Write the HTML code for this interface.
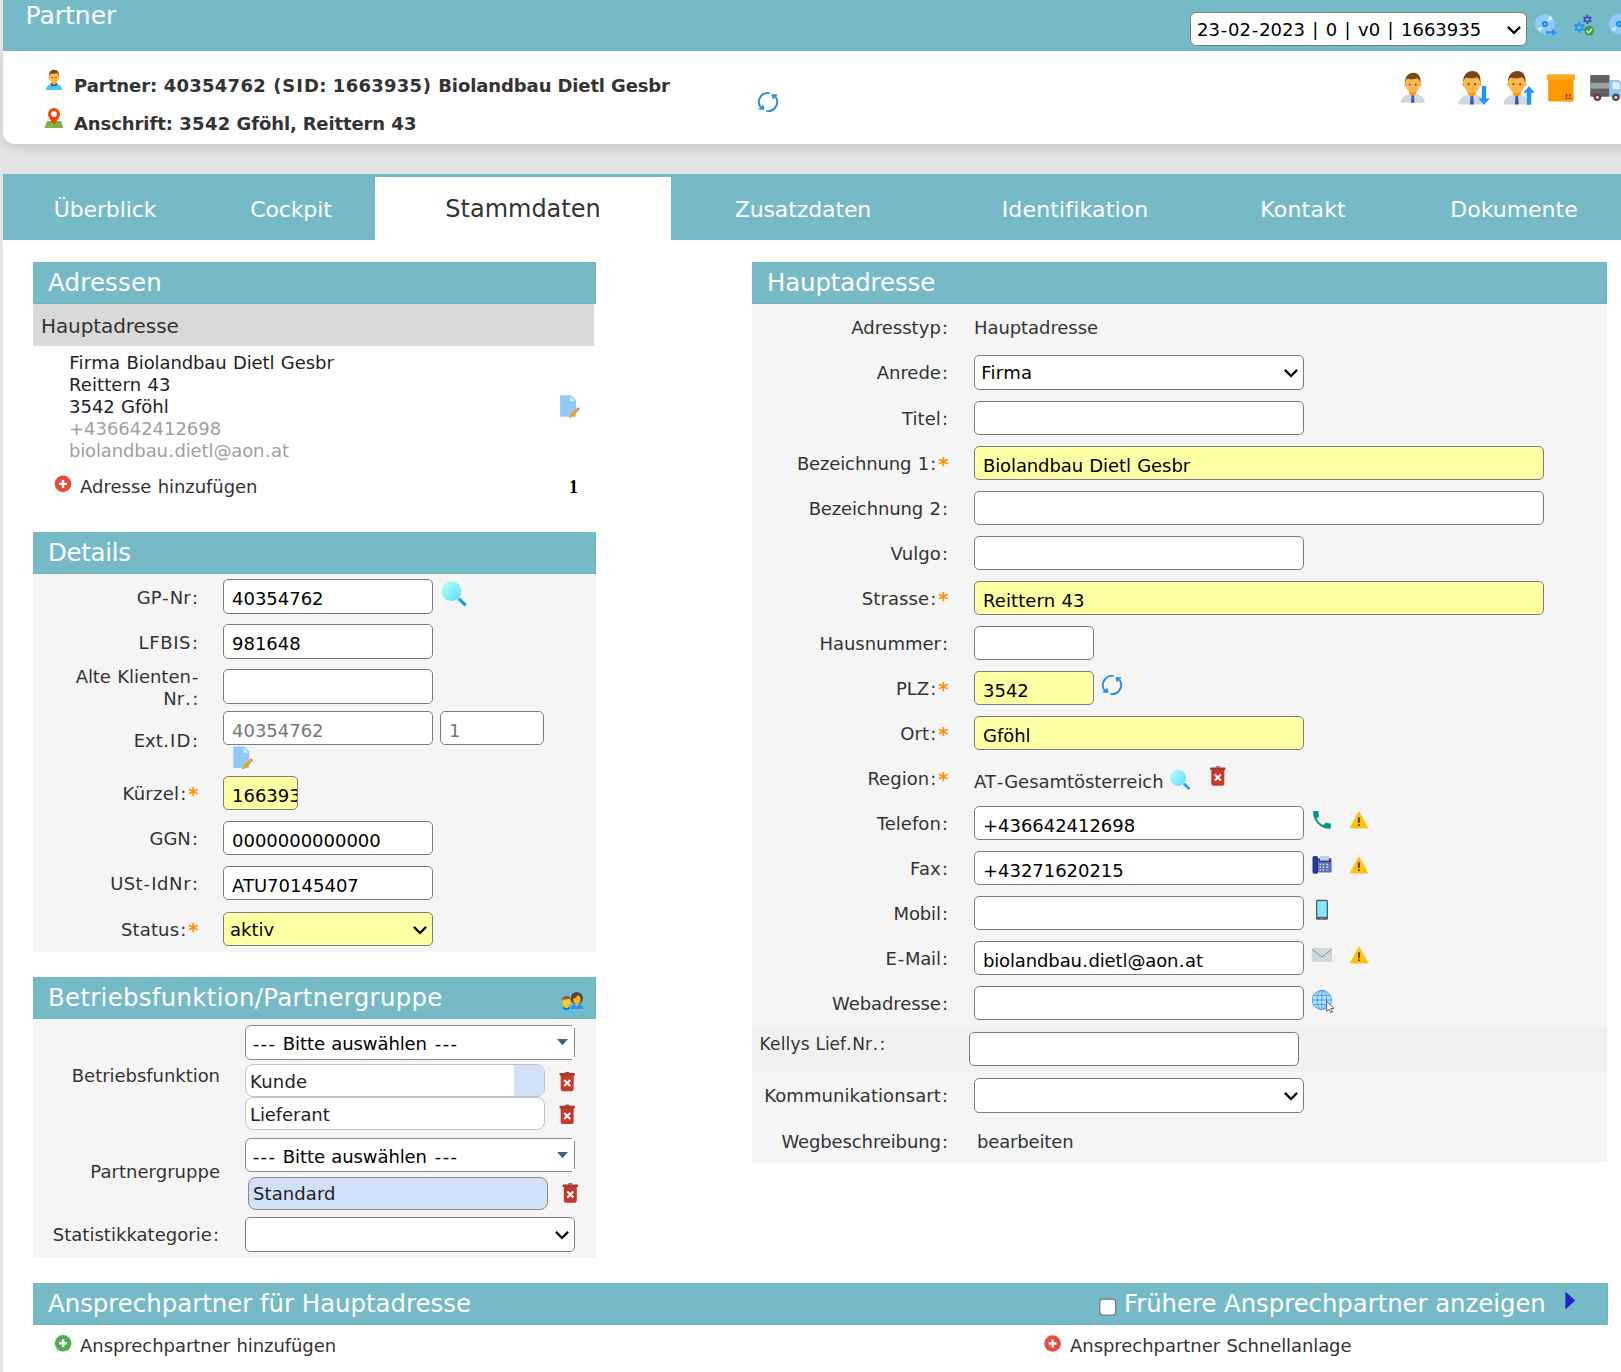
<!DOCTYPE html>
<html lang="de"><head>
<meta charset="utf-8">
<title>Partner</title>
<style>
*{box-sizing:border-box;margin:0;padding:0}
html,body{width:1621px;height:1372px;overflow:hidden;background:#e4e4e4}
body{font-family:"DejaVu Sans","Liberation Sans",sans-serif;font-size:18px;color:#333;position:relative}
.abs{position:absolute}
.teal{background:#76bac7}
.hd{position:absolute;height:42px;background:#76bac7;box-shadow:inset -1px -1px 0 #6cb3c1;color:#fff;font-size:24.4px;line-height:42px;padding-left:15px;white-space:nowrap}
.panel{position:absolute;background:#f5f5f5}
.lbl{position:absolute;text-align:right;white-space:nowrap;line-height:22px;font-size:18px;color:#333}
.req{color:#ff9000;font-weight:bold;font-size:19.5px;line-height:0;letter-spacing:1.25px;margin-left:.9px;margin-right:-.6px;position:relative;top:.6px}
.inp{position:absolute;height:34px;border:1px solid #7d7d7d;border-radius:5px;background:#fff;font-size:18px;line-height:22px;padding:8px 0 0 8px;color:#000;white-space:nowrap;overflow:hidden}
.inp.y{background:#ffffa4}
.inp.h35{height:35px}
.inp.dis{color:#777}
.sel{padding-top:6px;padding-left:6px}
.sel svg{position:absolute;right:4px;top:11.5px}
.txt{position:absolute;white-space:nowrap;line-height:22px}
.tab{position:absolute;top:174px;height:66px;line-height:71px;color:#fff;font-size:22px;text-align:center;white-space:nowrap}

.msel{border-radius:6px 2px 2px 6px;border-color:#8a8a8a;padding:7px 0 0 6px;height:35px;overflow:visible}
.msel::before,.msel::after{content:"";position:absolute;right:-1px;width:3px;height:3px;background:#fff}
.msel::before{top:-1px}
.msel::after{bottom:-1px}
.msel svg{position:absolute;right:6px;top:13.2px}
.ds{white-space:pre}
.chip{height:33px;border-color:#c4c4c4;border-radius:8px;padding:6px 0 0 4px;color:#222}
.chip .hl{position:absolute;right:0;top:0;width:30px;height:100%;background:#d2e1fa}
</style>
</head>
<body>
<!-- top header -->
<div class="abs teal" style="left:3px;top:0;width:1618px;height:51px"></div>
<div class="txt rb" style="left:25.5px;top:1px;color:#fff;font-size:25px;line-height:30px">Partner</div>
<div class="inp sel" style="left:1190px;top:12px;width:337px;height:34px;padding-top:6px;border-radius:6px"><span style="letter-spacing: -0.01px; margin-left: 0px; margin-right: 0px;">23</span><span style="letter-spacing: 1.67px; margin-left: 0.84px; margin-right: -0.84px;">-</span><span style="letter-spacing: -0.01px; margin-left: 0px; margin-right: 0px;">02</span><span style="letter-spacing: 1.67px; margin-left: 0.84px; margin-right: -0.84px;">-</span><span style="letter-spacing: -0.01px; margin-left: 0px; margin-right: 0px;">2023</span><span style="letter-spacing: 1.11px; margin-left: 0.55px; margin-right: -0.55px; white-space: pre;"> | </span><span style="letter-spacing: -0.01px; margin-left: 0px; margin-right: 0px;">0</span><span style="letter-spacing: 1.11px; margin-left: 0.55px; margin-right: -0.55px; white-space: pre;"> | </span><span style="letter-spacing: 0px; margin-left: 0px; margin-right: 0px;">v0</span><span style="letter-spacing: 1.11px; margin-left: 0.55px; margin-right: -0.55px; white-space: pre;"> | </span><span style="letter-spacing: -0.01px; margin-left: 0px; margin-right: 0px;">1663935</span><svg width="16" height="10" viewBox="0 0 16 10"><path d="M1.9 1.9l6.1 6.1 6.1-6.1" fill="none" stroke="#000" stroke-width="2.2"></path></svg></div>

<!-- info card -->
<div class="abs" style="left:3px;top:51px;width:1640px;height:93px;background:#fff;border-radius:0 0 0 12px;box-shadow:0 4px 10px rgba(0,0,0,.12)"></div>
<div class="txt" style="left:74px;top:75px;font-weight:bold;color:#333"><span style="letter-spacing: -0.02px; margin-left: -0.01px; margin-right: 0.01px;">Partner</span><span style="letter-spacing: -0.04px; margin-left: -0.02px; margin-right: 0.02px; white-space: pre;">: </span><span style="letter-spacing: 0.27px; margin-left: 0.14px; margin-right: -0.14px;">40354762</span><span style="letter-spacing: 0.71px; margin-left: 0.36px; margin-right: -0.36px; white-space: pre;"> (</span><span style="letter-spacing: 0.98px; margin-left: 0.49px; margin-right: -0.49px;">SID</span><span style="letter-spacing: -0.04px; margin-left: -0.02px; margin-right: 0.02px; white-space: pre;">: </span><span style="letter-spacing: 0.27px; margin-left: 0.14px; margin-right: -0.14px;">1663935</span><span style="letter-spacing: 0.71px; margin-left: 0.36px; margin-right: -0.36px; white-space: pre;">) </span><span style="letter-spacing: -0.09px; margin-left: -0.04px; margin-right: 0.04px;">Biolandbau</span><span style="letter-spacing: -0.13px; margin-left: -0.06px; margin-right: 0.06px; white-space: pre;"> </span><span style="letter-spacing: -0.14px; margin-left: -0.07px; margin-right: 0.07px;">Dietl</span><span style="letter-spacing: -0.13px; margin-left: -0.06px; margin-right: 0.06px; white-space: pre;"> </span><span style="letter-spacing: -0.14px; margin-left: -0.07px; margin-right: 0.07px;">Gesbr</span></div>
<div class="txt" style="left:74px;top:113px;font-weight:bold;color:#333"><span style="letter-spacing: -0.07px; margin-left: -0.04px; margin-right: 0.04px;">Anschrift</span><span style="letter-spacing: -0.04px; margin-left: -0.02px; margin-right: 0.02px; white-space: pre;">: </span><span style="letter-spacing: 0.27px; margin-left: 0.14px; margin-right: -0.14px;">3542</span><span style="letter-spacing: -0.13px; margin-left: -0.06px; margin-right: 0.06px; white-space: pre;"> </span><span style="letter-spacing: -0.09px; margin-left: -0.04px; margin-right: 0.04px;">Gföhl</span><span style="letter-spacing: -0.23px; margin-left: -0.11px; margin-right: 0.11px; white-space: pre;">, </span><span style="letter-spacing: -0.13px; margin-left: -0.07px; margin-right: 0.07px;">Reittern</span><span style="letter-spacing: -0.13px; margin-left: -0.06px; margin-right: 0.06px; white-space: pre;"> </span><span style="letter-spacing: 0.27px; margin-left: 0.13px; margin-right: -0.13px;">43</span></div>

<!-- tabs -->
<div class="abs teal" style="left:3px;top:174px;width:1618px;height:66px"></div>
<div class="abs" style="left:3px;top:240px;width:1618px;height:1132px;background:#fff"></div>
<div class="abs" style="left:375px;top:177px;width:296px;height:63px;background:#fff"></div>
<div class="tab" style="left:5px;width:200px"><span style="letter-spacing: -0.12px; margin-left: -0.06px; margin-right: 0.06px;">Überblick</span></div>
<div class="tab" style="left:191px;width:200px"><span style="letter-spacing: -0.11px; margin-left: -0.06px; margin-right: 0.06px;">Cockpit</span></div>
<div class="tab" style="left:375px;width:296px;color:#333;font-size:24px;line-height:70px"><span style="letter-spacing: -0.01px; margin-left: -0.01px; margin-right: 0.01px;">Stammdaten</span></div>
<div class="tab" style="left:703px;width:200px"><span style="letter-spacing: -0.11px; margin-left: -0.05px; margin-right: 0.05px;">Zusatzdaten</span></div>
<div class="tab" style="left:975px;width:200px"><span style="letter-spacing: 0.16px; margin-left: 0.08px; margin-right: -0.08px;">Identifikation</span></div>
<div class="tab" style="left:1203px;width:200px"><span style="letter-spacing: 0.21px; margin-left: 0.1px; margin-right: -0.1px;">Kontakt</span></div>
<div class="tab" style="left:1414px;width:200px"><span style="letter-spacing: 0px; margin-left: 0px; margin-right: 0px;">Dokumente</span></div>

<!-- LEFT: Adressen -->
<div class="hd rb" style="left:33px;top:262px;width:563px;letter-spacing:.22px">Adressen</div>
<div class="abs" style="left:33px;top:304px;width:561px;height:42px;background:#d9d9d9;border-top:1px solid #e0dddd"></div>
<div class="txt" style="left:41px;top:314px;font-size:20px;line-height:24px"><span style="letter-spacing: -0.08px; margin-left: -0.04px; margin-right: 0.04px;">Hauptadresse</span></div>
<div class="txt" style="left:69px;top:352px;color:#222"><span style="letter-spacing: 0.32px; margin-left: 0.16px; margin-right: -0.16px;">Firma</span><span style="letter-spacing: 0.6px; margin-left: 0.3px; margin-right: -0.3px; white-space: pre;"> </span><span style="letter-spacing: -0.11px; margin-left: -0.06px; margin-right: 0.06px;">Biolandbau</span><span style="letter-spacing: 0.6px; margin-left: 0.3px; margin-right: -0.3px; white-space: pre;"> </span><span style="letter-spacing: -0.09px; margin-left: -0.04px; margin-right: 0.04px;">Dietl</span><span style="letter-spacing: 0.6px; margin-left: 0.3px; margin-right: -0.3px; white-space: pre;"> </span><span style="letter-spacing: -0.06px; margin-left: -0.03px; margin-right: 0.03px;">Gesbr</span></div>
<div class="txt" style="left:69px;top:374px;color:#222"><span style="letter-spacing: 0.09px; margin-left: 0.04px; margin-right: -0.04px;">Reittern</span><span style="letter-spacing: 0.6px; margin-left: 0.3px; margin-right: -0.3px; white-space: pre;"> </span><span style="letter-spacing: -0.01px; margin-left: 0px; margin-right: 0px;">43</span></div>
<div class="txt" style="left:69px;top:396px;color:#222"><span style="letter-spacing: -0.01px; margin-left: 0px; margin-right: 0px;">3542</span><span style="letter-spacing: 0.6px; margin-left: 0.3px; margin-right: -0.3px; white-space: pre;"> </span><span style="letter-spacing: -0.04px; margin-left: -0.02px; margin-right: 0.02px;">Gföhl</span></div>
<div class="txt" style="left:69px;top:418px;color:#a0a0a0"><span style="letter-spacing: -0.03px; margin-left: -0.02px; margin-right: 0.02px;">+436642412698</span></div>
<div class="txt" style="left:69px;top:440px;color:#a0a0a0"><span style="letter-spacing: -0.13px; margin-left: -0.07px; margin-right: 0.07px;">biolandbau</span><span style="letter-spacing: 0.82px; margin-left: 0.41px; margin-right: -0.41px;">.</span><span style="letter-spacing: -0.11px; margin-left: -0.05px; margin-right: 0.05px;">dietl@aon</span><span style="letter-spacing: 0.82px; margin-left: 0.41px; margin-right: -0.41px;">.</span><span style="letter-spacing: -0.09px; margin-left: -0.05px; margin-right: 0.05px;">at</span></div>
<div class="txt" style="left:80px;top:476px"><span style="letter-spacing: 0.01px; margin-left: 0.01px; margin-right: -0.01px;">Adresse</span><span style="letter-spacing: 0.6px; margin-left: 0.3px; margin-right: -0.3px; white-space: pre;"> </span><span style="letter-spacing: -0.07px; margin-left: -0.03px; margin-right: 0.03px;">hinzufügen</span></div>
<div class="txt" style="left:569px;top:476px;font-family:'Liberation Serif',serif;font-weight:bold;color:#000;font-size:18px">1</div>

<!-- LEFT: Details -->
<div class="hd rb" style="left:33px;top:532px;width:563px;letter-spacing:-.27px">Details</div>
<div class="panel" style="left:33px;top:574px;width:563px;height:378px"></div>

<div class="lbl" style="left:33px;width:166px;top:587px"><span style="letter-spacing: 0px; margin-left: 0px; margin-right: 0px;">GP</span><span style="letter-spacing: 1.67px; margin-left: 0.84px; margin-right: -0.84px;">-</span><span style="letter-spacing: 0.14px; margin-left: 0.07px; margin-right: -0.07px;">Nr</span><span style="letter-spacing: 2.09px; margin-left: 1.05px; margin-right: -1.05px;">:</span></div>
<div class="inp h35 " style="left:223px;top:579px;width:210px"><span style="letter-spacing: -0.01px; margin-left: 0px; margin-right: 0px;">40354762</span></div>
<div class="lbl" style="left:33px;width:166px;top:632px"><span style="letter-spacing: 0.63px; margin-left: 0.31px; margin-right: -0.31px;">LFBIS</span><span style="letter-spacing: 2.09px; margin-left: 1.05px; margin-right: -1.05px;">:</span></div>
<div class="inp h35 " style="left:223px;top:624px;width:210px"><span style="letter-spacing: -0.01px; margin-left: 0px; margin-right: 0px;">981648</span></div>
<div class="lbl" style="left:33px;width:166px;top:666px;white-space:normal"><span style="letter-spacing: -0.1px; margin-left: -0.05px; margin-right: 0.05px;">Alte</span><span style="letter-spacing: 0.6px; margin-left: 0.3px; margin-right: -0.3px; white-space: pre;"> </span><span style="letter-spacing: -0.02px; margin-left: -0.01px; margin-right: 0.01px;">Klienten</span><span style="letter-spacing: 1.67px; margin-left: 0.84px; margin-right: -0.84px;">-</span><br><span style="letter-spacing: 0.14px; margin-left: 0.07px; margin-right: -0.07px;">Nr</span><span style="letter-spacing: 1.46px; margin-left: 0.73px; margin-right: -0.73px;">.:</span></div>
<div class="inp h35 " style="left:223px;top:669px;width:210px"></div>
<div class="lbl" style="left:33px;width:166px;top:730px"><span style="letter-spacing: 0.01px; margin-left: 0.01px; margin-right: -0.01px;">Ext</span><span style="letter-spacing: 0.82px; margin-left: 0.41px; margin-right: -0.41px;">.</span><span style="letter-spacing: 1.14px; margin-left: 0.57px; margin-right: -0.57px;">ID</span><span style="letter-spacing: 2.09px; margin-left: 1.05px; margin-right: -1.05px;">:</span></div>
<div class="inp dis" style="left:223px;top:711px;width:210px"><span style="letter-spacing: -0.01px; margin-left: 0px; margin-right: 0px;">40354762</span></div>
<div class="inp dis" style="left:440px;top:711px;width:104px"><span style="letter-spacing: -0.01px; margin-left: 0px; margin-right: 0px;">1</span></div>
<div class="lbl" style="left:33px;width:166px;top:783px"><span style="letter-spacing: 0.24px; margin-left: 0.12px; margin-right: -0.12px;">Kürzel</span><span style="letter-spacing: 2.09px; margin-left: 1.05px; margin-right: -1.05px;">:</span><span class="req">*</span></div>
<div class="inp y" style="left:223px;top:776px;width:75px"><span style="letter-spacing: -0.01px; margin-left: 0px; margin-right: 0px;">1663935</span></div>
<div class="lbl" style="left:33px;width:166px;top:828px"><span style="letter-spacing: 0px; margin-left: 0px; margin-right: 0px;">GGN</span><span style="letter-spacing: 2.09px; margin-left: 1.05px; margin-right: -1.05px;">:</span></div>
<div class="inp " style="left:223px;top:821px;width:210px"><span style="letter-spacing: -0.01px; margin-left: 0px; margin-right: 0px;">0000000000000</span></div>
<div class="lbl" style="left:33px;width:166px;top:873px"><span style="letter-spacing: 0.3px; margin-left: 0.15px; margin-right: -0.15px;">USt</span><span style="letter-spacing: 1.67px; margin-left: 0.84px; margin-right: -0.84px;">-</span><span style="letter-spacing: 0.58px; margin-left: 0.29px; margin-right: -0.29px;">IdNr</span><span style="letter-spacing: 2.09px; margin-left: 1.05px; margin-right: -1.05px;">:</span></div>
<div class="inp " style="left:223px;top:866px;width:210px"><span style="letter-spacing: 0.01px; margin-left: 0px; margin-right: 0px;">ATU70145407</span></div>
<div class="lbl" style="left:33px;width:166px;top:919px"><span style="letter-spacing: 0.12px; margin-left: 0.06px; margin-right: -0.06px;">Status</span><span style="letter-spacing: 2.09px; margin-left: 1.05px; margin-right: -1.05px;">:</span><span class="req">*</span></div>
<div class="inp sel y" style="left:223px;top:912px;width:210px;height:34px"><span style="letter-spacing: 0px; margin-left: 0px; margin-right: 0px;">aktiv</span><svg width="16" height="10" viewBox="0 0 16 10"><path d="M1.9 1.9l6.1 6.1 6.1-6.1" fill="none" stroke="#000" stroke-width="2.2"></path></svg></div>

<!-- LEFT: Betriebsfunktion -->
<div class="hd rb" style="left:33px;top:977px;width:563px;letter-spacing:.32px">Betriebsfunktion/Partnergruppe</div>
<div class="panel" style="left:33px;top:1020px;width:563px;height:238px"></div>


<div class="lbl" style="left:33px;width:187px;top:1065px"><span style="letter-spacing: -0.04px; margin-left: -0.02px; margin-right: 0.02px;">Betriebsfunktion</span></div>
<div class="lbl" style="left:33px;width:187px;top:1161px"><span style="letter-spacing: 0.03px; margin-left: 0.02px; margin-right: -0.02px;">Partnergruppe</span></div>
<div class="lbl" style="left:33px;width:187px;top:1224px"><span style="letter-spacing: 0.03px; margin-left: 0.01px; margin-right: -0.01px;">Statistikkategorie</span><span style="letter-spacing: 2.09px; margin-left: 1.05px; margin-right: -1.05px;">:</span></div>
<div class="inp msel" style="left:245px;top:1025px;width:330px"><span class="ds"><span style="letter-spacing: 1.41px; margin-left: 0.7px; margin-right: -0.7px; white-space: pre;">--- </span></span><span style="letter-spacing: -0.07px; margin-left: -0.04px; margin-right: 0.04px;">Bitte</span><span style="letter-spacing: 0.6px; margin-left: 0.3px; margin-right: -0.3px; white-space: pre;"> </span><span style="letter-spacing: -0.1px; margin-left: -0.05px; margin-right: 0.05px;">auswählen</span><span class="ds"><span style="letter-spacing: 1.41px; margin-left: 0.7px; margin-right: -0.7px; white-space: pre;"> ---</span></span><svg width="11" height="6.200" viewBox="0 0 11 6.200"><path d="M0 0h11l-5.500 6.200z" fill="#3f6478"></path></svg></div>
<div class="inp chip" style="left:245px;top:1064px;width:300px"><span class="hl"></span><span style="letter-spacing: 0.19px; margin-left: 0.1px; margin-right: -0.1px;">Kunde</span></div>
<div class="inp chip" style="left:245px;top:1097px;width:300px"><span style="letter-spacing: -0.08px; margin-left: -0.04px; margin-right: 0.04px;">Lieferant</span></div>
<div class="inp msel" style="left:245px;top:1138px;width:330px;height:34px"><span class="ds"><span style="letter-spacing: 1.41px; margin-left: 0.7px; margin-right: -0.7px; white-space: pre;">--- </span></span><span style="letter-spacing: -0.07px; margin-left: -0.04px; margin-right: 0.04px;">Bitte</span><span style="letter-spacing: 0.6px; margin-left: 0.3px; margin-right: -0.3px; white-space: pre;"> </span><span style="letter-spacing: -0.1px; margin-left: -0.05px; margin-right: 0.05px;">auswählen</span><span class="ds"><span style="letter-spacing: 1.41px; margin-left: 0.7px; margin-right: -0.7px; white-space: pre;"> ---</span></span><svg width="11" height="6.200" viewBox="0 0 11 6.200"><path d="M0 0h11l-5.500 6.200z" fill="#3f6478"></path></svg></div>
<div class="inp chip" style="left:248px;top:1177px;width:300px;background:#d2e1fa;border-color:#8a8a8a;padding-top:5px"><span style="letter-spacing: 0.08px; margin-left: 0.04px; margin-right: -0.04px;">Standard</span></div>
<div class="inp sel" style="left:245px;top:1217px;width:330px;height:35px"><svg width="16" height="10" viewBox="0 0 16 10"><path d="M1.9 1.9l6.1 6.1 6.1-6.1" fill="none" stroke="#000" stroke-width="2.2"></path></svg></div>

<!-- bottom -->
<div class="hd rb" style="left:33px;top:1283px;width:1575px">Ansprechpartner für Hauptadresse</div>
<div class="txt rb" style="left:1124px;top:1283px;line-height:42px;color:#fff;font-size:24.3px">Frühere Ansprechpartner anzeigen</div>
<div class="txt" style="left:80px;top:1335px"><span style="letter-spacing: -0.04px; margin-left: -0.02px; margin-right: 0.02px;">Ansprechpartner</span><span style="letter-spacing: 0.6px; margin-left: 0.3px; margin-right: -0.3px; white-space: pre;"> </span><span style="letter-spacing: -0.07px; margin-left: -0.03px; margin-right: 0.03px;">hinzufügen</span></div>
<div class="txt" style="left:1070px;top:1335px"><span style="letter-spacing: -0.04px; margin-left: -0.02px; margin-right: 0.02px;">Ansprechpartner</span><span style="letter-spacing: 0.6px; margin-left: 0.3px; margin-right: -0.3px; white-space: pre;"> </span><span style="letter-spacing: -0.09px; margin-left: -0.05px; margin-right: 0.05px;">Schnellanlage</span></div>

<!-- RIGHT: Hauptadresse -->
<div class="hd rb" style="left:752px;top:262px;width:855px;letter-spacing:-.09px">Hauptadresse</div>
<div class="panel" style="left:752px;top:304px;width:855px;height:859px"></div>

<div class="abs" style="left:752px;top:1026px;width:855px;height:46px;background:#f1f1f1"></div>
<div class="lbl" style="left:752px;width:197px;top:317px"><span style="letter-spacing: 0.03px; margin-left: 0.01px; margin-right: -0.01px;">Adresstyp</span><span style="letter-spacing: 2.09px; margin-left: 1.05px; margin-right: -1.05px;">:</span></div>
<div class="txt" style="left:974px;top:317px"><span style="letter-spacing: -0.07px; margin-left: -0.04px; margin-right: 0.04px;">Hauptadresse</span></div>
<div class="lbl" style="left:752px;width:197px;top:362px"><span style="letter-spacing: -0.04px; margin-left: -0.02px; margin-right: 0.02px;">Anrede</span><span style="letter-spacing: 2.09px; margin-left: 1.05px; margin-right: -1.05px;">:</span></div>
<div class="inp sel " style="left:974px;top:355px;width:330px;height:35px"><span style="letter-spacing: 0.32px; margin-left: 0.16px; margin-right: -0.16px;">Firma</span><svg width="16" height="10" viewBox="0 0 16 10"><path d="M1.9 1.9l6.1 6.1 6.1-6.1" fill="none" stroke="#000" stroke-width="2.2"></path></svg></div>
<div class="lbl" style="left:752px;width:197px;top:408px"><span style="letter-spacing: 0.04px; margin-left: 0.02px; margin-right: -0.02px;">Titel</span><span style="letter-spacing: 2.09px; margin-left: 1.05px; margin-right: -1.05px;">:</span></div>
<div class="inp " style="left:974px;top:401px;width:330px"></div>
<div class="lbl" style="left:752px;width:197px;top:453px"><span style="letter-spacing: -0.14px; margin-left: -0.07px; margin-right: 0.07px;">Bezeichnung</span><span style="letter-spacing: 0.6px; margin-left: 0.3px; margin-right: -0.3px; white-space: pre;"> </span><span style="letter-spacing: -0.01px; margin-left: 0px; margin-right: 0px;">1</span><span style="letter-spacing: 2.09px; margin-left: 1.05px; margin-right: -1.05px;">:</span><span class="req">*</span></div>
<div class="inp y" style="left:974px;top:446px;width:570px"><span style="letter-spacing: -0.11px; margin-left: -0.06px; margin-right: 0.06px;">Biolandbau</span><span style="letter-spacing: 0.6px; margin-left: 0.3px; margin-right: -0.3px; white-space: pre;"> </span><span style="letter-spacing: -0.09px; margin-left: -0.04px; margin-right: 0.04px;">Dietl</span><span style="letter-spacing: 0.6px; margin-left: 0.3px; margin-right: -0.3px; white-space: pre;"> </span><span style="letter-spacing: -0.06px; margin-left: -0.03px; margin-right: 0.03px;">Gesbr</span></div>
<div class="lbl" style="left:752px;width:197px;top:498px"><span style="letter-spacing: -0.14px; margin-left: -0.07px; margin-right: 0.07px;">Bezeichnung</span><span style="letter-spacing: 0.6px; margin-left: 0.3px; margin-right: -0.3px; white-space: pre;"> </span><span style="letter-spacing: -0.01px; margin-left: 0px; margin-right: 0px;">2</span><span style="letter-spacing: 2.09px; margin-left: 1.05px; margin-right: -1.05px;">:</span></div>
<div class="inp " style="left:974px;top:491px;width:570px"></div>
<div class="lbl" style="left:752px;width:197px;top:543px"><span style="letter-spacing: 0.06px; margin-left: 0.03px; margin-right: -0.03px;">Vulgo</span><span style="letter-spacing: 2.09px; margin-left: 1.05px; margin-right: -1.05px;">:</span></div>
<div class="inp " style="left:974px;top:536px;width:330px"></div>
<div class="lbl" style="left:752px;width:197px;top:588px"><span style="letter-spacing: 0.09px; margin-left: 0.05px; margin-right: -0.05px;">Strasse</span><span style="letter-spacing: 2.09px; margin-left: 1.05px; margin-right: -1.05px;">:</span><span class="req">*</span></div>
<div class="inp y" style="left:974px;top:581px;width:570px"><span style="letter-spacing: 0.09px; margin-left: 0.04px; margin-right: -0.04px;">Reittern</span><span style="letter-spacing: 0.6px; margin-left: 0.3px; margin-right: -0.3px; white-space: pre;"> </span><span style="letter-spacing: -0.01px; margin-left: 0px; margin-right: 0px;">43</span></div>
<div class="lbl" style="left:752px;width:197px;top:633px"><span style="letter-spacing: -0.04px; margin-left: -0.02px; margin-right: 0.02px;">Hausnummer</span><span style="letter-spacing: 2.09px; margin-left: 1.05px; margin-right: -1.05px;">:</span></div>
<div class="inp " style="left:974px;top:626px;width:120px"></div>
<div class="lbl" style="left:752px;width:197px;top:678px"><span style="letter-spacing: 0px; margin-left: 0px; margin-right: 0px;">PLZ</span><span style="letter-spacing: 2.09px; margin-left: 1.05px; margin-right: -1.05px;">:</span><span class="req">*</span></div>
<div class="inp y" style="left:974px;top:671px;width:120px"><span style="letter-spacing: -0.01px; margin-left: 0px; margin-right: 0px;">3542</span></div>
<div class="lbl" style="left:752px;width:197px;top:723px"><span style="letter-spacing: 0.1px; margin-left: 0.05px; margin-right: -0.05px;">Ort</span><span style="letter-spacing: 2.09px; margin-left: 1.05px; margin-right: -1.05px;">:</span><span class="req">*</span></div>
<div class="inp y" style="left:974px;top:716px;width:330px"><span style="letter-spacing: -0.04px; margin-left: -0.02px; margin-right: 0.02px;">Gföhl</span></div>
<div class="lbl" style="left:752px;width:197px;top:768px"><span style="letter-spacing: 0.01px; margin-left: 0.01px; margin-right: -0.01px;">Region</span><span style="letter-spacing: 2.09px; margin-left: 1.05px; margin-right: -1.05px;">:</span><span class="req">*</span></div>
<div class="txt" style="left:974px;top:771px"><span style="letter-spacing: 0.06px; margin-left: 0.03px; margin-right: -0.03px;">AT</span><span style="letter-spacing: 1.67px; margin-left: 0.84px; margin-right: -0.84px;">-</span><span style="letter-spacing: -0.04px; margin-left: -0.02px; margin-right: 0.02px;">Gesamtösterreich</span></div>
<div class="lbl" style="left:752px;width:197px;top:813px"><span style="letter-spacing: 0.04px; margin-left: 0.02px; margin-right: -0.02px;">Telefon</span><span style="letter-spacing: 2.09px; margin-left: 1.05px; margin-right: -1.05px;">:</span></div>
<div class="inp " style="left:974px;top:806px;width:330px"><span style="letter-spacing: -0.03px; margin-left: -0.02px; margin-right: 0.02px;">+436642412698</span></div>
<div class="lbl" style="left:752px;width:197px;top:858px"><span style="letter-spacing: 0.15px; margin-left: 0.07px; margin-right: -0.07px;">Fax</span><span style="letter-spacing: 2.09px; margin-left: 1.05px; margin-right: -1.05px;">:</span></div>
<div class="inp " style="left:974px;top:851px;width:330px"><span style="letter-spacing: -0.03px; margin-left: -0.02px; margin-right: 0.02px;">+43271620215</span></div>
<div class="lbl" style="left:752px;width:197px;top:903px"><span style="letter-spacing: -0.16px; margin-left: -0.08px; margin-right: 0.08px;">Mobil</span><span style="letter-spacing: 2.09px; margin-left: 1.05px; margin-right: -1.05px;">:</span></div>
<div class="inp " style="left:974px;top:896px;width:330px"></div>
<div class="lbl" style="left:752px;width:197px;top:948px"><span style="letter-spacing: 0px; margin-left: 0px; margin-right: 0px;">E</span><span style="letter-spacing: 1.67px; margin-left: 0.84px; margin-right: -0.84px;">-</span><span style="letter-spacing: -0.18px; margin-left: -0.09px; margin-right: 0.09px;">Mail</span><span style="letter-spacing: 2.09px; margin-left: 1.05px; margin-right: -1.05px;">:</span></div>
<div class="inp " style="left:974px;top:941px;width:330px"><span style="letter-spacing: -0.13px; margin-left: -0.07px; margin-right: 0.07px;">biolandbau</span><span style="letter-spacing: 0.82px; margin-left: 0.41px; margin-right: -0.41px;">.</span><span style="letter-spacing: -0.11px; margin-left: -0.05px; margin-right: 0.05px;">dietl@aon</span><span style="letter-spacing: 0.82px; margin-left: 0.41px; margin-right: -0.41px;">.</span><span style="letter-spacing: -0.09px; margin-left: -0.05px; margin-right: 0.05px;">at</span></div>
<div class="lbl" style="left:752px;width:197px;top:993px"><span style="letter-spacing: -0.09px; margin-left: -0.05px; margin-right: 0.05px;">Webadresse</span><span style="letter-spacing: 2.09px; margin-left: 1.05px; margin-right: -1.05px;">:</span></div>
<div class="inp " style="left:974px;top:986px;width:330px"></div>
<div class="txt" style="left:759.5px;top:1033px;font-size:17px"><span style="letter-spacing: 0.17px; margin-left: 0.09px; margin-right: -0.09px;">Kellys</span><span style="letter-spacing: 0.58px; margin-left: 0.29px; margin-right: -0.29px; white-space: pre;"> </span><span style="letter-spacing: -0.1px; margin-left: -0.05px; margin-right: 0.05px;">Lief</span><span style="letter-spacing: 0.78px; margin-left: 0.39px; margin-right: -0.39px;">.</span><span style="letter-spacing: 0.13px; margin-left: 0.06px; margin-right: -0.06px;">Nr</span><span style="letter-spacing: 1.38px; margin-left: 0.69px; margin-right: -0.69px;">.:</span></div>
<div class="inp " style="left:969px;top:1032px;width:330px"></div>
<div class="lbl" style="left:752px;width:197px;top:1085px"><span style="letter-spacing: 0.08px; margin-left: 0.04px; margin-right: -0.04px;">Kommunikationsart</span><span style="letter-spacing: 2.09px; margin-left: 1.05px; margin-right: -1.05px;">:</span></div>
<div class="inp sel " style="left:974px;top:1078px;width:330px;height:35px"><svg width="16" height="10" viewBox="0 0 16 10"><path d="M1.9 1.9l6.1 6.1 6.1-6.1" fill="none" stroke="#000" stroke-width="2.2"></path></svg></div>
<div class="lbl" style="left:752px;width:197px;top:1131px"><span style="letter-spacing: -0.12px; margin-left: -0.06px; margin-right: 0.06px;">Wegbeschreibung</span><span style="letter-spacing: 2.09px; margin-left: 1.05px; margin-right: -1.05px;">:</span></div>
<div class="txt" style="left:977px;top:1131px"><span style="letter-spacing: -0.15px; margin-left: -0.07px; margin-right: 0.07px;">bearbeiten</span></div>

<svg class="abs" style="left:0;top:0;pointer-events:none" width="1621" height="1372" viewBox="0 0 1621 1372"><defs><linearGradient id="mg" x1="0.150" y1="0.150" x2="0.850" y2="0.850"><stop offset="0" stop-color="#a8fefe"></stop><stop offset="1" stop-color="#6edcff"></stop></linearGradient></defs>
<g>
<path d="M46,90 C46,85.6 49.8,83.4 54,83.4 C58.2,83.4 62,85.6 62,90Z" fill="#4fc3f7"></path>
<ellipse cx="54" cy="84.300" rx="3.300" ry="1.800" fill="#01579b"></ellipse>
<path d="M51.600,79.500 h4.800 v3.800 c0,2.100 -4.800,2.100 -4.800,0z" fill="#ff9800"></path>
<circle cx="49.2" cy="77.6" r="1" fill="#ffb74d"></circle><circle cx="58.8" cy="77.6" r="1" fill="#ffb74d"></circle>
<ellipse cx="54" cy="77" rx="4.8" ry="5.9" fill="#ffb74d"></ellipse>
<path d="M49.1,77 C48.4,72.3 50.9,69.8 54.1,69.8 C57.6,69.8 59.7,72.6 58.9,77 C58.6,75.2 58,73.8 57,73.1 C54.6,74.2 51.6,73.8 50.4,73.5 C49.6,74.5 49.2,75.7 49.1,77Z" fill="#784719"></path>
<rect x="51.2" y="77.2" width="1.6" height="0.8" fill="#784719"></rect><rect x="55.2" y="77.2" width="1.6" height="0.8" fill="#784719"></rect>
</g>
<g><path d="M47.1,121 H61 L63.4,127.9 H44.5Z" fill="#7cb342"></path>
<path d="M54,124.9 C52,122 48,117.6 48,114 a6,6 0 1 1 12,0 C60,117.6 56,122 54,124.9Z" fill="#ff3d00"></path><circle cx="54" cy="114" r="3" fill="#fff"></circle></g>
<g transform="translate(768,102) scale(1.0)"><g transform="rotate(0)"><path d="M1.58,-8.96 A9.1,9.1 0 0 0 -7.45,5.22" fill="none" stroke="#2a8fd8" stroke-width="1.9"></path><path d="M-9.9,7.5 L-3.6,7.9 L-4.6,2.6Z" fill="#2a8fd8"></path></g><g transform="rotate(180)"><path d="M1.58,-8.96 A9.1,9.1 0 0 0 -7.45,5.22" fill="none" stroke="#2a8fd8" stroke-width="1.9"></path><path d="M-9.9,7.5 L-3.6,7.9 L-4.6,2.6Z" fill="#2a8fd8"></path></g></g>
<g transform="translate(1412.8,72.8) scale(1.0)"><path d="M-12,30 C-12,24.5 -7,21 0,21 C7,21 12,24.5 12,30Z" fill="#cfd8dc"></path><path d="M-1.2,22.2 h2.4 l0.5,7.8 h-3.4z" fill="#3f51b5"></path><path d="M-4,17 h8 l-0.6,4.2 l-3.4,1.6 l-3.4,-1.6z" fill="#ff9800"></path><circle cx="-7.4" cy="12" r="1.4" fill="#ffa726"></circle><circle cx="7.4" cy="12" r="1.4" fill="#ffa726"></circle><ellipse cx="0" cy="11.4" rx="7.2" ry="8.4" fill="#ffb74d"></ellipse><path d="M-7.6,11.5 C-8.6,4 -4.5,0 0.5,0 C6,0 8.6,4.5 7.6,11.5 C7.2,8.6 6.2,6.4 4.6,5.4 C1,7 -4,6.4 -5.8,6 C-6.9,7.6 -7.4,9.4 -7.6,11.5Z" fill="#784719"></path><circle cx="-3" cy="11.8" r="0.9" fill="#5d3a14"></circle><circle cx="3" cy="11.8" r="0.9" fill="#5d3a14"></circle></g>
<g transform="translate(1471.9,71.1) scale(1.117)"><path d="M-12,30 C-12,24.5 -7,21 0,21 C7,21 12,24.5 12,30Z" fill="#cfd8dc"></path><path d="M-1.2,22.2 h2.4 l0.5,7.8 h-3.4z" fill="#3f51b5"></path><path d="M-4,17 h8 l-0.6,4.2 l-3.4,1.6 l-3.4,-1.6z" fill="#ff9800"></path><circle cx="-7.4" cy="12" r="1.4" fill="#ffa726"></circle><circle cx="7.4" cy="12" r="1.4" fill="#ffa726"></circle><ellipse cx="0" cy="11.4" rx="7.2" ry="8.4" fill="#ffb74d"></ellipse><path d="M-7.6,11.5 C-8.6,4 -4.5,0 0.5,0 C6,0 8.6,4.5 7.6,11.5 C7.2,8.6 6.2,6.4 4.6,5.4 C1,7 -4,6.4 -5.8,6 C-6.9,7.6 -7.4,9.4 -7.6,11.5Z" fill="#784719"></path><circle cx="-3" cy="11.8" r="0.9" fill="#5d3a14"></circle><circle cx="3" cy="11.8" r="0.9" fill="#5d3a14"></circle></g>
<path d="M1481.8,86 h4.4 v12.4 h3.6 l-5.8,6.4 l-5.8,-6.4 h3.6z" fill="#2196f3"></path>
<g transform="translate(1516.8,71.1) scale(1.117)"><path d="M-12,30 C-12,24.5 -7,21 0,21 C7,21 12,24.5 12,30Z" fill="#cfd8dc"></path><path d="M-1.2,22.2 h2.4 l0.5,7.8 h-3.4z" fill="#3f51b5"></path><path d="M-4,17 h8 l-0.6,4.2 l-3.4,1.6 l-3.4,-1.6z" fill="#ff9800"></path><circle cx="-7.4" cy="12" r="1.4" fill="#ffa726"></circle><circle cx="7.4" cy="12" r="1.4" fill="#ffa726"></circle><ellipse cx="0" cy="11.4" rx="7.2" ry="8.4" fill="#ffb74d"></ellipse><path d="M-7.6,11.5 C-8.6,4 -4.5,0 0.5,0 C6,0 8.6,4.5 7.6,11.5 C7.2,8.6 6.2,6.4 4.6,5.4 C1,7 -4,6.4 -5.8,6 C-6.9,7.6 -7.4,9.4 -7.6,11.5Z" fill="#784719"></path><circle cx="-3" cy="11.8" r="0.9" fill="#5d3a14"></circle><circle cx="3" cy="11.8" r="0.9" fill="#5d3a14"></circle></g>
<path d="M1526.8,104.8 h4.4 v-12 h3.6 l-5.8,-6.6 l-5.8,6.600 h3.6z" fill="#2196f3"></path>
<g><rect x="1548.2" y="78" width="25.4" height="23.6" rx="1.5" fill="#ff9800"></rect><rect x="1546.8" y="74.3" width="28.2" height="5.8" rx="1" fill="#ffa726"></rect>
<path d="M1565.2,95.6 l1.3,-1.8 l1.3,1.800 h-0.8 v2 h-1 v-2z M1568.6,95.6 l1.300,-1.8 l1.3,1.8 h-0.8 v2 h-1 v-2z M1564.8,98.3 h6.6 v0.6 h-6.6z" fill="#5d4037"></path></g>
<g><rect x="1590.2" y="75" width="19.4" height="21.8" rx="1.2" fill="#616161"></rect><rect x="1590.2" y="82.8" width="19.4" height="5.8" fill="#95a5a6"></rect>
<path d="M1609.6,80 h8 c2,0 3,1 3.600,3 v13.800 h-11.600z" fill="#90caf9"></path><path d="M1612.5,82.300 h4.600 c1.500,0 2.300,0.700 2.700,2.300 l0.800,4.400 h-8.100z" fill="#e8eaf6"></path>
<circle cx="1597.4" cy="97.300" r="3.800" fill="#5d4037"></circle><circle cx="1597.4" cy="97.3" r="1.600" fill="#d7ccc8"></circle>
<circle cx="1615.9" cy="97.3" r="3.8" fill="#5d4037"></circle><circle cx="1615.9" cy="97.3" r="1.6" fill="#d7ccc8"></circle></g>
<g transform="translate(1544.9,24)"><circle r="10" fill="#90caf9"></circle><path d="M2.2,-2.2 L7.6,-6.4 A10,10 0 0 0 5.2,-8.4 Z M-2.2,2.2 L-7.6,6.4 A10,10 0 0 1 -5.6,4.2 Z" fill="#e3f2fd" opacity=".75"></path><path d="M1.8,-2.4 L4.6,-7.6 L7.9,-4.6 Z M-1.8,2.4 L-4.6,7.6 L-7.9,4.6 Z" fill="#e3f2fd" opacity=".8"></path><circle r="3" fill="#1e88e5"></circle><circle r="1.1" fill="#90caf9"></circle><path d="M0.8,7.3 h6.6 v-2.6 l4.2,3.7 l-4.2,3.7 v-2.6 h-6.6z" fill="#2196f3"></path></g>
<g transform="translate(1619,24)"><circle r="10" fill="#90caf9"></circle><path d="M2.2,-2.2 L7.6,-6.4 A10,10 0 0 0 5.2,-8.4 Z M-2.2,2.2 L-7.6,6.4 A10,10 0 0 1 -5.6,4.2 Z" fill="#e3f2fd" opacity=".75"></path><path d="M1.8,-2.4 L4.6,-7.6 L7.9,-4.6 Z M-1.8,2.4 L-4.6,7.6 L-7.9,4.6 Z" fill="#e3f2fd" opacity=".8"></path><circle r="3" fill="#1e88e5"></circle><circle r="1.1" fill="#90caf9"></circle></g>
<path d="M1588.39,22.44 L1588.28,24.02 L1586.52,24.02 L1586.41,22.44 L1585.26,21.78 L1583.84,22.47 L1582.96,20.95 L1584.27,20.07 L1584.27,18.73 L1582.96,17.85 L1583.84,16.33 L1585.26,17.02 L1586.41,16.36 L1586.52,14.78 L1588.28,14.78 L1588.39,16.36 L1589.54,17.02 L1590.96,16.33 L1591.84,17.85 L1590.53,18.73 L1590.53,20.07 L1591.84,20.95 L1590.96,22.47 L1589.54,21.78Z M1588.90,19.40 a1.5,1.5 0 1 0 -3.0,0 a1.5,1.5 0 1 0 3.0,0Z" fill="#3f51b5" fill-rule="evenodd"></path>
<path d="M1580.51,31.11 L1580.35,32.90 L1578.25,32.90 L1578.09,31.11 L1576.69,30.30 L1575.06,31.06 L1574.01,29.24 L1575.49,28.21 L1575.49,26.59 L1574.01,25.56 L1575.06,23.74 L1576.69,24.50 L1578.09,23.69 L1578.25,21.90 L1580.35,21.90 L1580.51,23.69 L1581.91,24.50 L1583.54,23.74 L1584.59,25.56 L1583.11,26.59 L1583.11,28.21 L1584.59,29.24 L1583.54,31.06 L1581.91,30.30Z M1581.20,27.40 a1.9,1.9 0 1 0 -3.8,0 a1.9,1.9 0 1 0 3.8,0Z" fill="#2196f3" fill-rule="evenodd"></path>
<circle cx="1589.2" cy="30.8" r="5" fill="#43a047"></circle><path d="M1586.6,30.800 l1.9,1.900 l3.500,-3.600" fill="none" stroke="#e8f5e9" stroke-width="1.500"></path>
<g transform="translate(560.1,395.2)"><path d="M0,0 H10.900 L15.900,5.100 V21.500 H0Z" fill="#90caf9"></path><path d="M10.200,1.600 L14.800,6.000 H10.200Z" fill="#e1f5fe"></path>
<g transform="translate(9.200,22.400) rotate(-44.500)"><path d="M2.600,-1.600 H10.400 V1.600 H2.600 L0,0Z" fill="#ff9800"></path><path d="M0,0 L2.600,-1.600 V1.600Z" fill="#ffc107"></path><path d="M0,0 L1.100,-0.700 V0.700Z" fill="#37474f"></path><rect x="10.400" y="-1.600" width="1.100" height="3.200" fill="#b0bec5"></rect><path d="M11.500,-1.600 h1 a1,1 0 0 1 1,1 v1.200 a1,1 0 0 1 -1,1 h-1z" fill="#e57373"></path></g></g>
<g transform="translate(233.3,746.4)"><path d="M0,0 H10.900 L15.900,5.100 V21.500 H0Z" fill="#90caf9"></path><path d="M10.200,1.600 L14.800,6.000 H10.200Z" fill="#e1f5fe"></path>
<g transform="translate(9.200,22.400) rotate(-44.500)"><path d="M2.600,-1.600 H10.400 V1.600 H2.600 L0,0Z" fill="#ff9800"></path><path d="M0,0 L2.600,-1.600 V1.600Z" fill="#ffc107"></path><path d="M0,0 L1.100,-0.700 V0.700Z" fill="#37474f"></path><rect x="10.400" y="-1.600" width="1.100" height="3.200" fill="#b0bec5"></rect><path d="M11.500,-1.600 h1 a1,1 0 0 1 1,1 v1.200 a1,1 0 0 1 -1,1 h-1z" fill="#e57373"></path></g></g>
<g transform="translate(63,483.9)"><circle r="8.300" fill="#e74c3c"></circle><path d="M-4,0H4M0,-4V4" stroke="#fff" stroke-width="2.400"></path></g>
<g transform="translate(63.1,1343.3)"><circle r="8.300" fill="#4caf50"></circle><path d="M-4,0H4M0,-4V4" stroke="#fff" stroke-width="2.400"></path></g>
<g transform="translate(1052.6,1343.5)"><circle r="8.300" fill="#e74c3c"></circle><path d="M-4,0H4M0,-4V4" stroke="#fff" stroke-width="2.400"></path></g>
<g transform="translate(451.5,591.3) scale(1.0)"><path d="M6.200,8.400 L8.400,6.200 L15.200,13.000 L13.000,15.200Z" fill="#199be2"></path><path d="M6.200,8.400 L8.400,6.200 L9.800,7.600 L7.600,9.800Z" fill="#2ab4e6"></path><circle r="10" fill="url(#mg)"></circle></g>
<g transform="translate(1178,777.8) scale(0.81)"><path d="M6.200,8.400 L8.400,6.200 L15.200,13.000 L13.000,15.200Z" fill="#199be2"></path><path d="M6.200,8.400 L8.400,6.200 L9.800,7.600 L7.600,9.800Z" fill="#2ab4e6"></path><circle r="10" fill="url(#mg)"></circle></g>
<g transform="translate(1210,766.2)"><path d="M1.300,3.000 H14.300 V17.300 a2.200,2.200 0 0 1 -2.200,2.200 H3.500 a2.200,2.200 0 0 1 -2.200,-2.200Z" fill="#c9382b"></path><path d="M5.300,1.400 a2.500,1.500 0 0 1 5,0Z" fill="#b53a2c"></path><rect x="0" y="1.200" width="15.600" height="2.600" rx="1" fill="#a33b2e"></rect><path d="M4.800,8.300 L10.800,14.300 M10.800,8.300 L4.800,14.300" stroke="#fff" stroke-width="2.100"></path></g>
<g transform="translate(559.4,1071.8)"><path d="M1.300,3.000 H14.300 V17.300 a2.200,2.200 0 0 1 -2.200,2.200 H3.500 a2.200,2.200 0 0 1 -2.200,-2.200Z" fill="#c9382b"></path><path d="M5.300,1.400 a2.500,1.500 0 0 1 5,0Z" fill="#b53a2c"></path><rect x="0" y="1.200" width="15.600" height="2.600" rx="1" fill="#a33b2e"></rect><path d="M4.800,8.300 L10.800,14.300 M10.800,8.300 L4.800,14.300" stroke="#fff" stroke-width="2.100"></path></g>
<g transform="translate(559.4,1104.6)"><path d="M1.300,3.000 H14.300 V17.300 a2.200,2.200 0 0 1 -2.200,2.200 H3.500 a2.200,2.200 0 0 1 -2.200,-2.200Z" fill="#c9382b"></path><path d="M5.300,1.400 a2.500,1.500 0 0 1 5,0Z" fill="#b53a2c"></path><rect x="0" y="1.200" width="15.600" height="2.600" rx="1" fill="#a33b2e"></rect><path d="M4.800,8.300 L10.800,14.300 M10.800,8.300 L4.800,14.300" stroke="#fff" stroke-width="2.100"></path></g>
<g transform="translate(562.5,1183.2)"><path d="M1.300,3.000 H14.300 V17.300 a2.200,2.200 0 0 1 -2.200,2.200 H3.500 a2.200,2.200 0 0 1 -2.200,-2.200Z" fill="#c9382b"></path><path d="M5.300,1.400 a2.500,1.500 0 0 1 5,0Z" fill="#b53a2c"></path><rect x="0" y="1.200" width="15.600" height="2.600" rx="1" fill="#a33b2e"></rect><path d="M4.800,8.300 L10.800,14.300 M10.800,8.300 L4.800,14.300" stroke="#fff" stroke-width="2.100"></path></g>
<g transform="translate(1358.9,811.8)"><path d="M0,0 L8.900,16.100 H-8.900Z" fill="#ffc107" stroke="#ffc107" stroke-width="0.800" stroke-linejoin="round"></path><rect x="-1" y="5.400" width="2" height="5.800" fill="#5d4037"></rect><rect x="-1" y="12.400" width="2" height="1.800" fill="#5d4037"></rect></g>
<g transform="translate(1358.9,856.9)"><path d="M0,0 L8.900,16.100 H-8.900Z" fill="#ffc107" stroke="#ffc107" stroke-width="0.800" stroke-linejoin="round"></path><rect x="-1" y="5.400" width="2" height="5.800" fill="#5d4037"></rect><rect x="-1" y="12.400" width="2" height="1.800" fill="#5d4037"></rect></g>
<g transform="translate(1359,946.9)"><path d="M0,0 L8.900,16.100 H-8.900Z" fill="#ffc107" stroke="#ffc107" stroke-width="0.800" stroke-linejoin="round"></path><rect x="-1" y="5.400" width="2" height="5.800" fill="#5d4037"></rect><rect x="-1" y="12.400" width="2" height="1.800" fill="#5d4037"></rect></g>
<g transform="translate(1310.1,808) scale(0.985)"><path d="M6.620 10.790c1.440 2.830 3.760 5.140 6.590 6.590l2.200-2.200c.27-.27.670-.36 1.020-.24 1.120.37 2.330.57 3.570.57.550 0 1 .45 1 1V20c0 .55-.45 1-1 1-9.390 0-17-7.610-17-17 0-.55.450-1 1-1h3.500c.55 0 1 .45 1 1 0 1.250.2 2.450.57 3.570.11.350.030.740-.25 1.020l-2.200 2.200z" fill="#009688"></path></g>
<g><rect x="1318" y="858" width="13.600" height="14.600" rx="1" fill="#5c6bc0"></rect><rect x="1312.500" y="856" width="5.600" height="17.800" rx="1.800" fill="#283593"></rect><rect x="1319" y="859.600" width="11.400" height="2.200" rx="0.600" fill="#263238"></rect><rect x="1320" y="856" width="8.900" height="4.700" fill="#c5cae9"></rect><rect x="1319.5" y="863.6" width="1.7" height="1.600" fill="#bbdefb"></rect><rect x="1322.6" y="863.6" width="1.7" height="1.600" fill="#bbdefb"></rect><rect x="1326.1" y="863.6" width="2.2" height="1.600" fill="#bbdefb"></rect><rect x="1319.5" y="866.4" width="1.7" height="1.600" fill="#bbdefb"></rect><rect x="1322.6" y="866.4" width="1.7" height="1.600" fill="#bbdefb"></rect><rect x="1326.1" y="866.4" width="2.2" height="1.600" fill="#bbdefb"></rect><rect x="1319.5" y="869.2" width="1.7" height="1.600" fill="#bbdefb"></rect><rect x="1322.6" y="869.2" width="1.7" height="1.600" fill="#bbdefb"></rect><rect x="1326.1" y="869.2" width="2.2" height="1.600" fill="#8bc34a"></rect></g>
<g><rect x="1316" y="899.800" width="12" height="20" rx="1.600" fill="#5a5a5a"></rect><rect x="1317.300" y="901.200" width="9.400" height="15.600" fill="#84e9fc"></rect><rect x="1320.800" y="917.900" width="2.400" height="0.800" fill="#bdbdbd"></rect></g>
<g><rect x="1311.800" y="948" width="20.200" height="14" rx="1.600" fill="#cfd8dc"></rect><path d="M1312.200,949.600 L1321.900,957 L1331.600,949.600" fill="none" stroke="#78909c" stroke-width="1"></path></g>
<g transform="translate(1321.900,1000)"><circle r="9.600" fill="#bbdefb" stroke="#42a5f5" stroke-width="1"></circle><path d="M-9.600,0H9.600M-8.400,-4.600H8.400M-8.400,4.600H8.400M0,-9.600V9.600" stroke="#42a5f5" stroke-width="1" fill="none"></path><ellipse rx="4.800" ry="9.600" fill="none" stroke="#42a5f5" stroke-width="1"></ellipse><path d="M4.800,1.400 L4.800,11.400 L7.200,9.200 L8.900,12.800 L10.500,12.100 L8.900,8.600 L12,8.300Z" fill="#fff" stroke="#455a64" stroke-width="0.900" stroke-linejoin="round"></path></g>
<g transform="translate(1112,685) scale(1.0)"><g transform="rotate(0)"><path d="M1.58,-8.96 A9.1,9.1 0 0 0 -7.45,5.22" fill="none" stroke="#2a8fd8" stroke-width="1.9"></path><path d="M-9.9,7.5 L-3.6,7.9 L-4.6,2.6Z" fill="#2a8fd8"></path></g><g transform="rotate(180)"><path d="M1.58,-8.96 A9.1,9.1 0 0 0 -7.45,5.22" fill="none" stroke="#2a8fd8" stroke-width="1.9"></path><path d="M-9.9,7.5 L-3.6,7.9 L-4.6,2.6Z" fill="#2a8fd8"></path></g></g>
<g>
<path d="M570.400,1009 C570.400,1005.600 573.400,1004.200 576.800,1004.200 C580.400,1004.200 583.300,1005.600 583.300,1009Z" fill="#2196f3"></path>
<ellipse cx="576.800" cy="998.300" rx="6" ry="6.300" fill="#5d4037"></ellipse>
<path d="M575.200,1002 h3.200 v3.200 l-1.600,1.300 l-1.600,-1.300z" fill="#e6b422"></path>
<ellipse cx="576.900" cy="999.500" rx="3.700" ry="4.300" fill="#ebb92a"></ellipse>
<path d="M573,999 C573.200,996 575,994.800 577.600,995 C577,996.800 575.200,998.400 573,999Z" fill="#5d4037"></path>
<path d="M559.900,1012.800 C559.900,1008.800 563,1007 566.500,1007 C570,1007 573.100,1008.800 573.100,1012.800Z" fill="#4fc3f7"></path>
<ellipse cx="566.400" cy="1008" rx="3" ry="1.700" fill="#01579b"></ellipse>
<path d="M564.400,1004.500 h4 v2.800 c0,1.500 -4,1.500 -4,0z" fill="#fbc02d"></path>
<ellipse cx="566.400" cy="1002" rx="4.100" ry="4.800" fill="#ffca28"></ellipse>
<path d="M562.200,1002 C561.600,998 563.600,996 566.500,996 C569.500,996 571.200,998.200 570.600,1002 C570.300,1000.400 569.800,999.400 569,998.800 C567,999.700 564.400,999.400 563.300,999.200 C562.600,1000 562.300,1001 562.200,1002Z" fill="#8d5a3b"></path>
</g>
<rect x="1099.800" y="1299.200" width="15.800" height="15.800" rx="3" fill="#fff" stroke="#767676" stroke-width="1.200"></rect>
<path d="M1565.400,1291.400 L1575.200,1300.500 L1565.400,1309.600Z" fill="#2222cc"></path>
</svg>


</body></html>
